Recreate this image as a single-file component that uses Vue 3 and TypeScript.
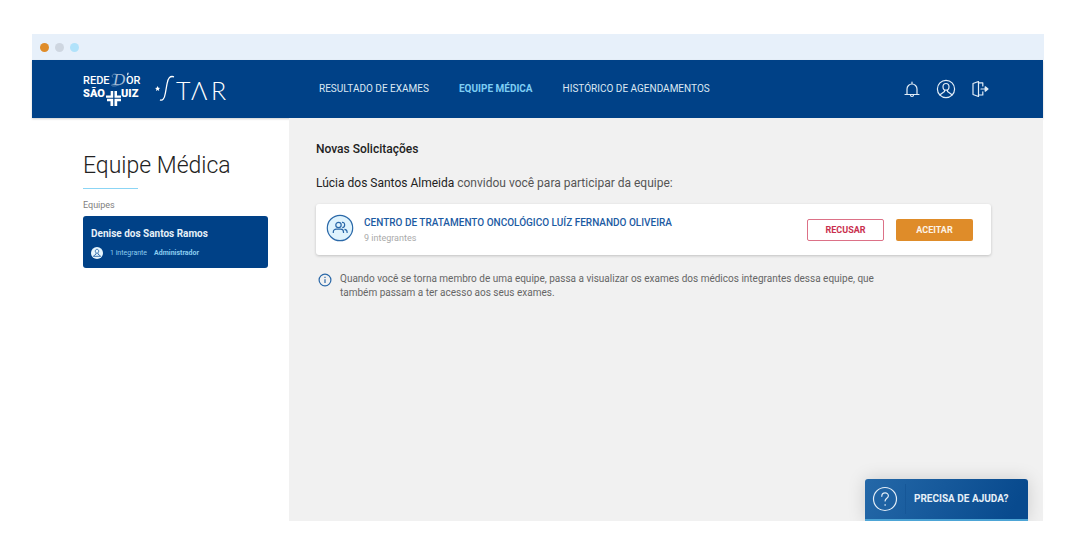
<script setup lang="ts">
import { ref } from 'vue'

const navItems = [
  { label: 'RESULTADO DE EXAMES', active: false },
  { label: 'EQUIPE MÉDICA', active: true },
  { label: 'HISTÓRICO DE AGENDAMENTOS', active: false },
]
const team = ref({ owner: 'Denise dos Santos Ramos', members: '1 integrante', role: 'Administrador' })
const invite = ref({
  from: 'Lúcia dos Santos Almeida',
  team: 'CENTRO DE TRATAMENTO ONCOLÓGICO LUÍZ FERNANDO OLIVEIRA',
  members: '9 integrantes',
})
</script>

<template>
  <div class="window">
    <div class="titlebar">
      <span class="dot orange"></span><span class="dot grey"></span><span class="dot blue"></span>
    </div>

    <header class="header">
      <a class="brand" href="#" aria-label="Rede D'Or São Luiz Star">
        <svg width="148" height="46" viewBox="0 -6 148 46" fill="#fff">
          <text class="rede" x="0" y="12">REDE</text>
          <text class="script" x="30" y="13">D</text>
          <path d="M44.500 .8h1.300l-.8 2.400h-1z" />
          <path d="M34 2.500c-4-1.500-6 1-4 3M32 12.500c-3-1-5 1-2 1.500 3 .3 6-1 8-2" fill="none" stroke="#7fa0c3" stroke-width=".7" />
          <text class="rede" x="43" y="12">OR</text>
          <text class="sao" x="0" y="25">SÃO</text>
          <text class="sao" x="38" y="25">UIZ</text>
          <path d="M23 23.400h4.700V19h2.500v6.700H23zM38 23.400h-4V19h-2.500v6.700H38zM24 26.700h6.200V34h-2.700v-4.700H24zM38 26.700h-6.500V34h2.700v-4.700H38z" />
          <path d="M74.600 14l.8 1.700 1.800.2-1.400 1.200.4 1.900-1.600-1-1.600 1 .4-1.900-1.400-1.200 1.800-.2z" />
          <path d="M91 4.800C87 3.500 85 6 84 12l-1.600 9c-1 6-3 8-5.400 6.800" fill="none" stroke="#fff" stroke-width="1.300" />
          <text class="star" x="93" y="28">T</text>
          <text class="star" x="108" y="28">Λ</text>
          <text class="star" x="128" y="28">R</text>
        </svg>
      </a>
      <nav class="nav">
        <a v-for="item in navItems" :key="item.label" href="#" :class="{ active: item.active }">{{ item.label }}</a>
      </nav>
      <div class="actions">
        <button type="button" aria-label="Notificações">
          <svg width="18" height="18" viewBox="0 0 18 18" class="line">
            <path d="M2 14.500h14M4 14.300V9a5 5 0 0 1 10 0v5.300M9 2v2M7.500 15a1.500 1.500 0 0 0 3 0" />
          </svg>
        </button>
        <button type="button" aria-label="Perfil">
          <svg width="20" height="20" viewBox="0 0 20 20" class="line">
            <circle cx="10" cy="10" r="8.600" />
            <path d="M10 4.500c-2 0-3 1.400-3 3.200 0 1.900 1.300 3.500 3 3.500s3-1.600 3-3.500c0-1.800-1-3.200-3-3.200zM8.500 11v1.500L4 15.800M11.500 11v1.500l4.500 3.300" />
          </svg>
        </button>
        <button type="button" aria-label="Sair">
          <svg width="18" height="18" viewBox="0 0 18 18" class="line">
            <path d="M7.500 1.500v15L2 14.500v-11zM7.500 2.800h4.300V6M7.500 15h4.300v-3.200M10 9h6" />
            <path d="M14.200 6.800L17 9l-2.800 2.200z" fill="#e2edf7" />
          </svg>
        </button>
      </div>
    </header>

    <div class="body">
      <aside class="sidebar">
        <h1>Equipe Médica</h1>
        <p class="label">Equipes</p>
        <button type="button" class="team">
          <span class="team-name">{{ team.owner }}</span>
          <span class="team-meta">
            <svg width="12" height="12" viewBox="0 0 12 12">
              <circle cx="6" cy="6" r="6" fill="#e6f5fd" />
              <path d="M6 2.300c-1.100 0-1.700.8-1.700 1.900S5 6.200 6 6.200s1.700-.9 1.700-2S7.100 2.300 6 2.300zM5 6.200v.9L2.300 9.300h7.400L7 7.100v-.9" fill="none" stroke="#2a68a8" stroke-width=".9" />
            </svg>
            <span>{{ team.members }}</span>
            <strong>{{ team.role }}</strong>
          </span>
        </button>
      </aside>

      <main class="main">
        <h2>Novas Solicitações</h2>
        <p class="invite"><strong>{{ invite.from }}</strong> convidou você para participar da equipe:</p>
        <section class="card">
          <svg class="group" width="28" height="28" viewBox="0 0 28 28">
            <circle cx="14" cy="14" r="12.700" />
            <circle cx="12.500" cy="11" r="2.700" />
            <path d="M7.300 19v-1c0-2 1.300-2.800 3-2.800h4.200c1.700 0 3 .8 3 2.800v1M16 8.300c3.400-.4 3.600 5 .2 5.300M18.400 15.300c1.700.2 2.700 1.200 2.700 2.700v1" />
          </svg>
          <div class="card-text">
            <h3>{{ invite.team }}</h3>
            <p>{{ invite.members }}</p>
          </div>
          <button type="button" class="btn refuse">RECUSAR</button>
          <button type="button" class="btn accept">ACEITAR</button>
        </section>
        <div class="note">
          <svg width="14" height="14" viewBox="0 0 14 14">
            <circle cx="7" cy="7" r="5.900" /><path d="M7 6.200V10M7 3.700v1.200" />
          </svg>
          <p>Quando você se torna membro de uma equipe, passa a visualizar os exames dos médicos integrantes dessa equipe, que também passam a ter acesso aos seus exames.</p>
        </div>
      </main>

      <button type="button" class="help">
        <svg width="26" height="26" viewBox="0 0 26 26" class="line">
          <circle cx="13" cy="13" r="11.500" />
          <path d="M9.800 10.300c0-4.500 6.600-4.300 6.600-.5 0 2.400-3.300 2.500-3.300 5.200M13.100 18.500v.8" />
        </svg>
        <span>PRECISA DE AJUDA?</span>
      </button>
    </div>
  </div>
</template>

<style>
body {
  margin: 0;
  background: #fff;
}
</style>

<style scoped>
.window {
  margin: 34px 36px 0 32px;
  font-family: Roboto, "Liberation Sans", sans-serif;
}
h1, h2, h3, p {
  margin: 0;
}
button {
  font-family: inherit;
  border: 0;
  background: none;
  padding: 0;
  cursor: pointer;
}
svg {
  display: block;
  flex: none;
}
.titlebar {
  display: flex;
  align-items: center;
  gap: 6px;
  height: 26px;
  padding-left: 8px;
  background: #e7f0fa;
}
.dot {
  width: 9px;
  height: 9px;
  border-radius: 50%;
}
.orange { background: #df8c29; }
.grey { background: #ced6e0; }
.blue { background: #b0e2fa; }
.header {
  position: relative;
  display: flex;
  align-items: center;
  height: 58px;
  margin-right: 1px;
  background: #004187;
  box-shadow: 0 1px 2px rgba(0, 0, 0, 0.2);
}
.brand {
  flex: none;
  width: 236px;
  padding-left: 51px;
}
.rede { font: 500 11px Roboto, sans-serif; }
.sao { font: 900 11px Roboto, sans-serif; }
.script { font: italic 17px "Liberation Serif", serif; fill: #a6bed6; }
.star { font: 300 25px Lato, sans-serif; }
.nav {
  display: flex;
  flex: 1;
  gap: 30px;
}
.nav a {
  color: #dce8f3;
  font-size: 10px;
  line-height: 16px;
  text-decoration: none;
  white-space: nowrap;
}
.nav a.active {
  color: #7dcdf4;
  font-weight: 700;
}
.actions {
  display: flex;
  align-items: center;
  gap: 15px;
  padding-right: 54px;
}
.line {
  fill: none;
  stroke: #e2edf7;
  stroke-width: 1.2;
  stroke-linecap: round;
  stroke-linejoin: round;
}
.body {
  position: relative;
  display: flex;
  min-height: 403px;
  margin-right: 1px;
}
.sidebar {
  box-sizing: border-box;
  flex: none;
  width: 257px;
  padding: 30px 21px 0 51px;
}
h1 {
  color: #222;
  font-size: 23px;
  font-weight: 300;
  line-height: 36px;
}
h1::after {
  content: "";
  display: block;
  width: 55px;
  height: 1px;
  margin-top: 4px;
  background: #8bd5f5;
}
.label {
  margin-top: 9px;
  color: #808080;
  font-size: 9px;
  line-height: 14px;
}
.team {
  display: block;
  width: 100%;
  height: 52px;
  margin-top: 4px;
  padding: 0 8px;
  border-radius: 3px;
  background: #004187;
  color: #e6f0f8;
  text-align: left;
}
.team-name {
  display: block;
  font-size: 10px;
  font-weight: 700;
  line-height: 16px;
}
.team-meta {
  display: flex;
  align-items: center;
  gap: 7px;
  margin-top: 5px;
  color: #8bcdf0;
  font-size: 7px;
  line-height: 12px;
}
.team-meta strong { font-weight: 700; }
.main {
  flex: 1;
  min-width: 0;
  padding: 23px 52px 0 27px;
  background: #f1f1f1;
}
h2 {
  color: #222;
  font-size: 12px;
  font-weight: 500;
  line-height: 16px;
}
.invite {
  margin-top: 18px;
  color: #555;
  font-size: 12px;
  line-height: 16px;
}
.invite strong {
  color: #222;
  font-weight: 400;
}
.card {
  display: flex;
  align-items: center;
  height: 51px;
  margin-top: 13px;
  padding: 0 18px 0 10px;
  border-radius: 3px;
  background: #fff;
  box-shadow: 0 1px 3px rgba(0, 0, 0, 0.2);
}
.group {
  margin-bottom: 4px;
  fill: #dff3fd;
  stroke: #2a68a8;
  stroke-width: 1.2;
}
.group path { fill: none; }
.card-text {
  flex: 1;
  margin-left: 10px;
}
h3 {
  color: #1c5ba3;
  font-size: 10px;
  font-weight: 500;
  line-height: 16px;
}
.card-text p {
  color: #aaa;
  font-size: 9px;
  line-height: 14px;
}
.btn {
  box-sizing: border-box;
  width: 77px;
  height: 22px;
  border-radius: 2px;
  font-size: 9px;
  font-weight: 700;
}
.refuse {
  border: 1px solid #dc7187;
  color: #c9304e;
}
.accept {
  margin-left: 12px;
  background: #df8c29;
  color: #fdf3e6;
}
.note {
  display: flex;
  gap: 8px;
  max-width: 560px;
  margin-top: 17px;
  padding-left: 2px;
  color: #666;
  font-size: 10px;
  line-height: 14px;
}
.note svg {
  margin-top: 1px;
  fill: none;
  stroke: #2a68a8;
  stroke-width: 1.2;
}
.help {
  position: absolute;
  right: 15px;
  bottom: 0;
  display: flex;
  align-items: center;
  box-sizing: border-box;
  width: 163px;
  height: 42px;
  padding-left: 7px;
  border-bottom: 2px solid #4da5d6;
  border-radius: 3px 3px 0 0;
  background: linear-gradient(115deg, #2468a8, #084a8e 90%);
  box-shadow: 0 0 18px rgba(0, 0, 0, 0.15);
  color: #e6f0f8;
  font-size: 10px;
  font-weight: 700;
  white-space: nowrap;
}
.help span {
  margin-left: 7px;
  padding-left: 8px;
  border-left: 1px solid #165798;
  line-height: 30px;
}
</style>
